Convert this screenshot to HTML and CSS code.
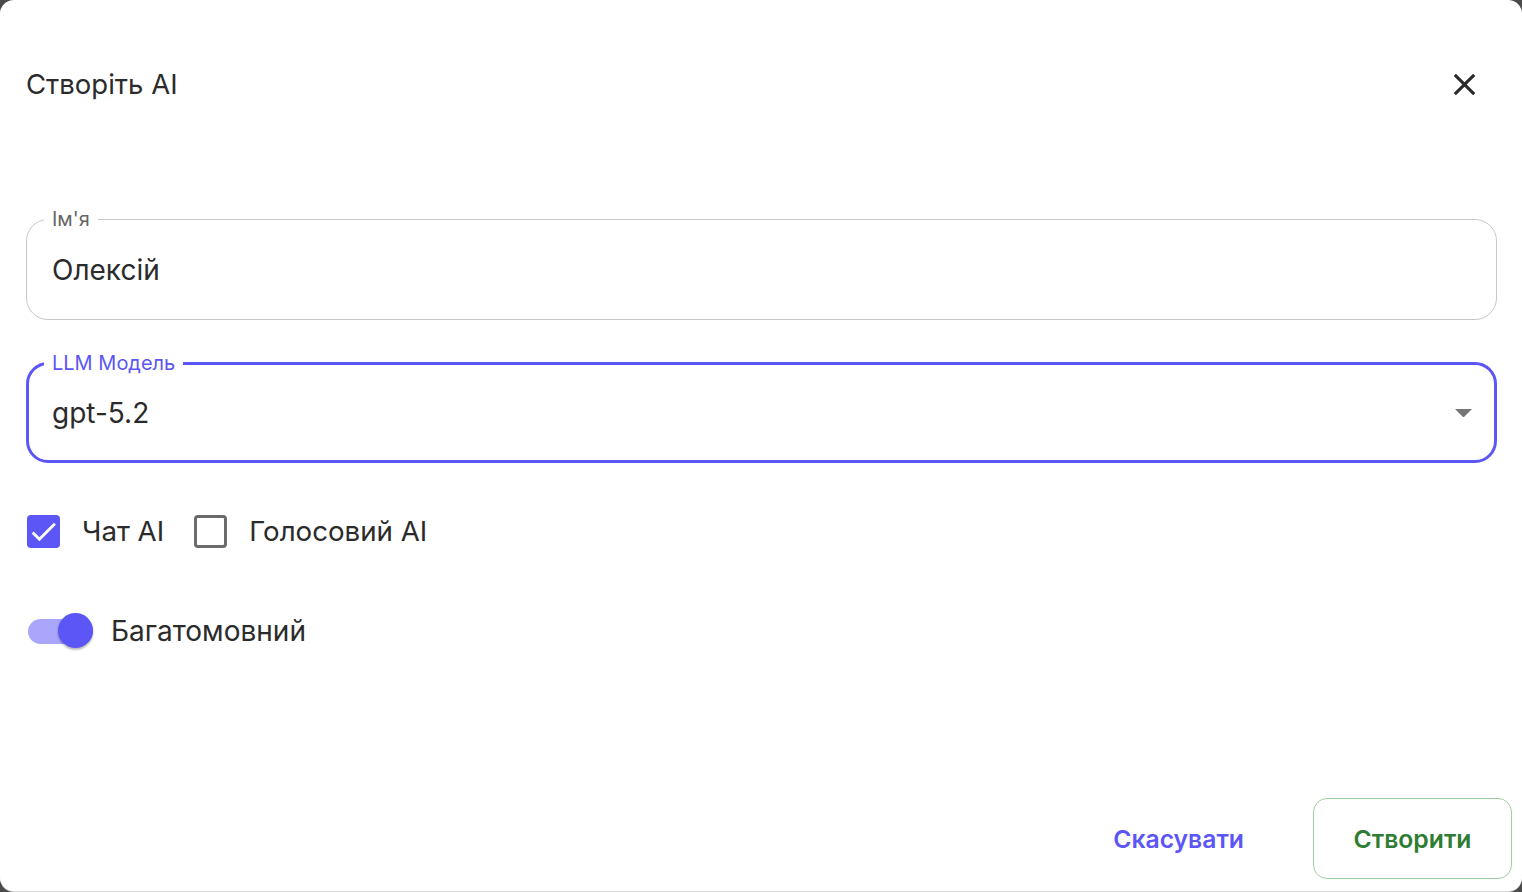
FILE: index.html
```html
<!DOCTYPE html>
<html lang="uk">
<head>
<meta charset="utf-8">
<title>Створіть AI</title>
<link rel="stylesheet" href="styles.css">
</head>
<body>
<div class="dialog">
  <header class="dialog-header">
    <h2 class="dialog-title">Створіть AI</h2>
    <button class="close-btn" aria-label="Закрити">
      <svg viewBox="0 0 24 24" width="37" height="37"><path fill="#2b2b2b" d="M19 6.41 17.59 5 12 10.59 6.41 5 5 6.41 10.59 12 5 17.59 6.41 19 12 13.41 17.59 19 19 17.59 13.41 12z"/></svg>
    </button>
  </header>
  <div class="dialog-content">
    <fieldset class="field">
      <legend>Ім'я</legend>
      <div class="field-value">Олексій</div>
    </fieldset>
    <fieldset class="field field-focused">
      <legend>LLM Модель</legend>
      <div class="field-value">
        <span>gpt-5.2</span>
        <svg class="dropdown-arrow" viewBox="7 10 10 5" width="17" height="8.5"><path fill="#757575" d="M7 10l5 5 5-5z"/></svg>
      </div>
    </fieldset>
    <div class="checks">
      <label class="check">
        <span class="box box-checked">
          <svg viewBox="0 0 24 24" width="33" height="33"><path fill="#fff" d="M9 16.17 4.83 12l-1.42 1.41L9 19 21 7l-1.41-1.41z"/></svg>
        </span>
        <span class="check-label">Чат AI</span>
      </label>
      <label class="check">
        <span class="box box-empty"></span>
        <span class="check-label">Голосовий AI</span>
      </label>
    </div>
    <div class="switch-row">
      <span class="switch"><span class="track"></span><span class="thumb"></span></span>
      <span class="check-label">Багатомовний</span>
    </div>
  </div>
  <footer class="dialog-actions">
    <button class="btn btn-text">Скасувати</button>
    <button class="btn btn-outlined">Створити</button>
  </footer>
</div>
</body>
</html>
```
FILE: styles.css
```css
html, body {
  margin: 0;
  padding: 0;
}
body {
  width: 1522px;
  height: 892px;
  overflow: hidden;
  background: #4a4a4a;
  font-family: Inter, "Noto Sans", "DejaVu Sans", sans-serif;
  color: #2b2b2b;
}
.dialog {
  width: 1522px;
  height: 891px;
  box-sizing: border-box;
  background: #fff;
  border-radius: 14px;
  box-shadow: 0 1px 0 #dcdcdc;
  display: flex;
  flex-direction: column;
}
.dialog-header {
  display: flex;
  justify-content: space-between;
  align-items: center;
  padding: 60px 36px 0 26px;
  height: 48px;
}
.dialog-title {
  margin: 0;
  font-size: 27.5px;
  font-weight: 400;
  line-height: 48px;
}
.close-btn {
  width: 44px;
  height: 44px;
  padding: 0;
  border: none;
  background: none;
  display: flex;
  align-items: center;
  justify-content: center;
}
.dialog-content {
  padding: 99px 25px 0 26px;
  display: flex;
  flex-direction: column;
}
.field {
  margin: 0;
  padding: 0 17px;
  border: 1px solid #c8c8c8;
  border-radius: 22px;
  min-width: 0;
}
.field legend {
  padding: 0 8px;
  font-size: 20px;
  line-height: 24px;
  color: #666;
}
.field-value {
  height: 88px;
  box-sizing: border-box;
  padding: 0 8px 10px;
  display: flex;
  align-items: center;
  justify-content: space-between;
  font-size: 28px;
  color: #2b2b2b;
}
.field-focused {
  margin-top: 31px;
  padding: 0 15px;
  border: 3px solid #5c56f6;
}
.field-focused legend {
  color: #5c56f6;
}
.field-focused .field-value {
  height: 85px;
  padding-bottom: 9px;
}
.dropdown-arrow {
  margin-right: -1px;
}
.checks {
  margin-top: 51px;
  margin-left: 1px;
  display: flex;
  align-items: center;
  gap: 30px;
  height: 34px;
}
.check {
  display: flex;
  align-items: center;
  gap: 22px;
}
.box {
  width: 33px;
  height: 33px;
  box-sizing: border-box;
  border-radius: 4px;
  display: flex;
  align-items: center;
  justify-content: center;
}
.box-checked {
  background: #5c56f6;
}
.box-empty {
  border: 3px solid #6b6b6b;
}
.check-label {
  font-size: 27.7px;
  line-height: 34px;
  color: #2b2b2b;
}
.switch-row {
  margin-top: 65px;
  margin-left: 2px;
  display: flex;
  align-items: center;
  gap: 18px;
  height: 36px;
}
.switch-row .check-label {
  font-size: 28px;
}
.switch {
  position: relative;
  width: 65px;
  height: 36px;
  display: flex;
  align-items: center;
}
.track {
  width: 65px;
  height: 25px;
  border-radius: 13px;
  background: #aaa6fb;
}
.thumb {
  position: absolute;
  right: 0;
  top: 0;
  width: 35px;
  height: 35px;
  border-radius: 50%;
  background: #5c56f6;
  box-shadow: 0 2px 2px rgba(0,0,0,0.2), 0 1px 3px rgba(0,0,0,0.12);
}
.dialog-actions {
  margin-top: auto;
  display: flex;
  justify-content: flex-end;
  align-items: center;
  gap: 27px;
  padding: 0 10px 12px 0;
}
.btn {
  height: 81px;
  padding: 0 41px;
  border-radius: 14px;
  font-family: inherit;
  font-size: 24.7px;
  font-weight: 600;
  background: none;
  border: 1px solid transparent;
}
.btn-text {
  color: #5c56f6;
}
.btn-outlined {
  width: 199px;
  padding: 0;
  color: #2e7d32;
  border-color: #9fcfa1;
}
```
